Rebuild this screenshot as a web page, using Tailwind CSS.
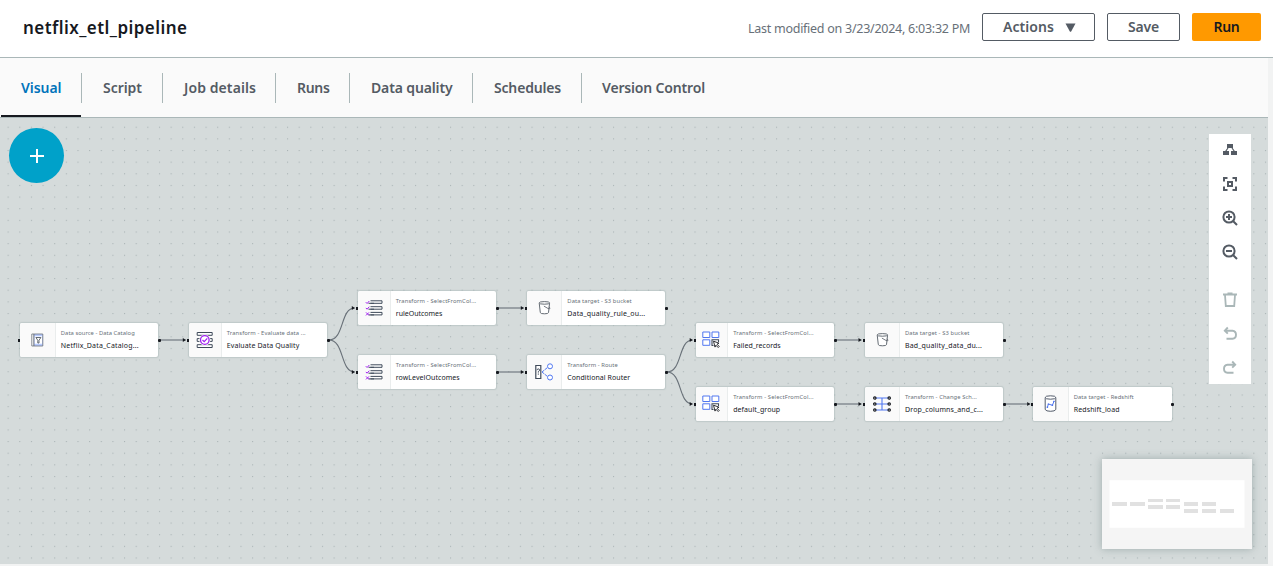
<!DOCTYPE html>
<html lang="en">
<head>
<meta charset="utf-8">
<title>netflix_etl_pipeline</title>
<script src="https://cdn.jsdelivr.net/npm/@tailwindcss/browser@4"></script>
</head>
<body class="w-[1273px] h-[566px] overflow-hidden bg-[#f2f3f3] font-['Noto_Sans','Open_Sans',sans-serif] flex flex-col text-[#545b64]">

<header class="h-[58px] shrink-0 bg-white border-b border-[#aab7b8] flex items-start justify-between pl-[23px] pr-3">
  <h1 class="pt-[15px] text-[17px] leading-[26px] font-semibold text-[#16191f] whitespace-nowrap"><span data-f="600 17px" data-w="164.5">netflix_etl_pipeline</span></h1>
  <div class="flex items-start pt-[13px]">
    <p class="w-[222px] mr-3 pt-1.5 text-[12.5px] leading-5 text-[#687078] whitespace-nowrap"><span data-f="400 12.5px" data-w="222">Last modified on 3/23/2024, 6:03:32 PM</span></p>
    <button class="w-[113px] h-7 mr-3 border border-[#545b64] rounded-[2px] flex items-center pl-5 text-[14px] leading-5 font-semibold whitespace-nowrap"><span data-f="600 14px" data-w="51">Actions</span><svg class="ml-[11px]" width="11" height="9" viewBox="0 0 11 9"><path d="M.5.5h10L6.3 8.2q-.8 1-1.6 0z" fill="#545b64"/></svg></button>
    <button class="w-[73px] h-7 mr-3 border border-[#545b64] rounded-[2px] text-[14px] leading-5 font-semibold whitespace-nowrap"><span data-f="600 14px" data-w="31">Save</span></button>
    <button class="w-[69px] h-7 rounded-[2px] bg-[#ff9900] text-[#16191f] text-[14px] leading-5 font-semibold whitespace-nowrap"><span data-f="600 14px" data-w="26">Run</span></button>
  </div>
</header>

<nav class="w-[1268px] h-[60px] shrink-0 bg-[#fafafa] border-b border-[#aab7b8] flex text-[14px] leading-5 font-semibold whitespace-nowrap">
  <div class="w-[81px] ml-px h-[59px] pt-[15px] text-[#0073bb] flex flex-col justify-between"><div class="h-[30px] pt-[5px] pl-5 border-r border-[#aab7b8]"><span data-f="600 14px" data-w="40.5">Visual</span></div><div class="w-20 h-0.5 bg-[#16191f]"></div></div>
  <div class="w-[81px] mt-[15px] h-[30px] pt-[5px] pl-[21px] border-r border-[#aab7b8]"><span data-f="600 14px" data-w="39">Script</span></div>
  <div class="w-[113px] mt-[15px] h-[30px] pt-[5px] pl-[21px] border-r border-[#aab7b8]"><span data-f="600 14px" data-w="72">Job details</span></div>
  <div class="w-[74px] mt-[15px] h-[30px] pt-[5px] pl-[21px] border-r border-[#aab7b8]"><span data-f="600 14px" data-w="32.5">Runs</span></div>
  <div class="w-[123px] mt-[15px] h-[30px] pt-[5px] pl-[21px] border-r border-[#aab7b8]"><span data-f="600 14px" data-w="81.5">Data quality</span></div>
  <div class="w-[109px] mt-[15px] h-[30px] pt-[5px] pl-[21px] border-r border-[#aab7b8]"><span data-f="600 14px" data-w="67">Schedules</span></div>
  <div class="mt-[15px] h-[30px] pt-[5px] pl-5"><span data-f="600 14px" data-w="103">Version Control</span></div>
</nav>

<main class="relative w-[1268px] h-[446px] shrink-0 overflow-hidden bg-[#d5dbdb]">
  <svg class="absolute inset-0" width="1268" height="446">
    <defs>
      <pattern id="dots" x="7.6" y="8.7" width="11.642" height="11.642" patternUnits="userSpaceOnUse"><rect width="1.1" height="1.1" fill="#aab4b5"/></pattern>
    </defs>
    <rect width="1268" height="446" fill="url(#dots)"/>
    <g id="edges" transform="translate(0 -118)" fill="none" stroke="#687078" stroke-width="1.1"></g>
  </svg>
  <div id="nodes"></div>

  <button class="absolute left-[9px] top-[10px] size-[55px] rounded-full bg-[#00a1c9] flex items-center justify-center">
    <svg class="ml-px mt-px" width="14" height="14" viewBox="0 0 14 14"><path d="M7 0v14M0 7h14" stroke="#fff" stroke-width="2"/></svg>
  </button>

  <div class="absolute left-[1209px] top-4 w-[42px] h-[250px] bg-white flex flex-col items-center pt-2">
    <svg class="size-4 mb-[18px]" viewBox="0 0 16 16"><path d="M5 2h6v4H5zM1 9h6v4H1zM9 9h6v4H9z" fill="#545b64"/><path d="M6 6 3.5 9.5M10 6l2.500 3.500" stroke="#545b64" stroke-width="1.200"/></svg>
    <svg class="size-4 mb-[18px]" viewBox="0 0 16 16" fill="none" stroke="#545b64" stroke-width="2"><path d="M2 5.500V2h3.500M10.500 2H14v3.500M14 10.500V14h-3.500M5.500 14H2v-3.500M6 6h4v4H6z"/></svg>
    <svg class="size-4 mb-[18px] -ml-px" viewBox="0 0 16 16" fill="none" stroke="#545b64" stroke-width="2"><circle cx="7" cy="7" r="5.600"/><path d="m11 11 4 4M4 7h6M7 4v6"/></svg>
    <svg class="size-4 mb-8 -ml-px" viewBox="0 0 16 16" fill="none" stroke="#545b64" stroke-width="2"><circle cx="7" cy="7" r="5.600"/><path d="m11 11 4 4M4 7h6"/></svg>
    <svg class="size-4 mb-[18px]" viewBox="0 0 16 16" fill="none" stroke="#aab7b8" stroke-width="1.800"><path d="M1 2.500h14M5.500 1.400h5M3 3l.8 11h8.400L13 3"/></svg>
    <svg class="size-4 mb-[18px]" viewBox="0 0 16 16" fill="none" stroke="#aab7b8" stroke-width="1.900"><path d="M3 4.700h7.500q3.500.3 3.500 4t-3.500 4H4.500M5.800 1.500 2.800 4.700l3 3"/></svg>
    <svg class="size-4" viewBox="0 0 16 16" fill="none" stroke="#aab7b8" stroke-width="1.900"><path d="M13 4.700H5.500Q2 5 2 8.700t3.500 4h6M10.200 1.500l3 3.200-3 3"/></svg>
  </div>

  <div class="absolute left-[1102px] top-[341px] w-[150px] h-[90px] bg-[#f5f5f5] shadow-[0_0_8px_rgba(90,115,115,0.45)]">
    <svg width="150" height="90" fill="#e1e1e1"><path fill="#fff" d="M7.500 21.300h135v47.500h-135z"/><path d="M10 43h15v4H10zM28 43h15v4H28zM46 40h15v3H46zM64 40h14v3H64zM46 46h15v4H46zM64 46h14v4H64zM82 43h14v4H82zM100 43h14v4h-14zM82 50h14v4H82zM100 50h14v4h-14zM118 50h14v4h-14z"/></svg>
  </div>
</main>

<script>
const icons = {
  catalog: '<g transform="translate(.3 0)"><path d="M3.500 3h2.200v12H3.500z" fill="#fff" stroke="#687078" stroke-width=".8"/><path d="M5.700 3h8.800v12H5.700z" fill="#b9ccff" stroke="#687078" stroke-width=".8"/><path d="M6.500 5.200h7.200v7.500H6.500z" fill="#fff"/><path d="M7.600 6.500h5L10.700 9.300V12H9.500V9.300z" fill="none" stroke="#545b64" stroke-width=".9"/></g>',
  quality: '<path d="M1.200 1.500h15v2.800h-15zM1.200 7.600h15v2.800h-15zM1.200 13.700h15v2.800h-15z" fill="#fff" stroke="#3f4a5a" stroke-width="1"/><circle cx="8.800" cy="9" r="5.600" fill="#fafafa"/><circle cx="8.800" cy="9" r="4.300" fill="#fff" stroke="#a020f0" stroke-width="1.300"/><path d="m6.500 9 1.700 1.700 3.100-3.400" fill="none" stroke="#a020f0" stroke-width="1.200"/>',
  list: '<path d="M5.500 1.800H17v2.500H5.500M5.500 7.700H17v2.500H5.500M5.500 13.400H17v2.500H5.500" fill="#fff" stroke="#3f4a5a"/><path d="M3.500 4.300H9M3.500 10.200H9M3.500 15.900H9" stroke="#3f4a5a"/><path d="m.8 3.200 1.300 1.300L4.300 2M.8 8.900l1.300 1.300L4.300 7.700M1 13.400l3 3M4 13.400l-3 3" fill="none" stroke="#a020f0"/>',
  bucket: '<g transform="translate(.4 -.4)"><path d="M3.800 4.300 4.900 14q.2 1.200 4.100 1.200t4.100-1.200l1.100-9.700" fill="#fff" stroke="#545b64" stroke-width=".9"/><ellipse cx="9" cy="4.300" rx="5.200" ry="1.300" fill="#fff" stroke="#545b64" stroke-width=".9"/><path d="m8.500 7.500 4 2.300q2 1 2.100-.2 0-.6-1.200-1.200" fill="none" stroke="#545b64" stroke-width=".8"/></g>',
  router: '<path d="M.8 2.500h5v13h-5z" fill="#fff" stroke="#3f4a5a" stroke-width="1.200"/><path d="M2 7.200q.1-1.300 1.300-1.300t1.300 1.200q0 .8-1.300 1.500v1M3.300 10.500v1.200" fill="none" stroke="#3f4a5a"/><path d="m7 9 5.500-4.500M7 9l5.500 4.500" stroke="#5077f0" stroke-dasharray="3 .7"/><g fill="#fff" stroke="#5077f0"><circle cx="15" cy="3.300" r="2.500"/><circle cx="15" cy="14.500" r="2.500"/></g>',
  select: '<path d="M.8 1h7v5.500h-7zM10 1h6.800v5.500H10zM.8 8.800h7v5.500h-7z" fill="#fff" stroke="#5077f0"/><path d="M16.500 11V8.800h-6.500v5.700h1.500" fill="#fff" stroke="#3f4a5a" stroke-width="1.100"/><path d="m11.500 10.200 5.500 2-2 1 2.200 2.300-1 1-2.300-2.300-.9 1.900z" fill="#fff" stroke="#16191f" stroke-width=".9"/>',
  schema: '<path d="M9 3v12M3 3h12M3 9h12M3 15h12" stroke="#5077f0" stroke-width="1.100"/><g fill="#fff" stroke="#16191f" stroke-width="1.200"><circle cx="1.800" cy="3" r="1.200"/><circle cx="1.800" cy="9" r="1.200"/><circle cx="1.800" cy="15" r="1.200"/><circle cx="16.200" cy="3" r="1.200"/><circle cx="16.200" cy="9" r="1.200"/><circle cx="16.200" cy="15" r="1.200"/></g>',
  redshift: '<g transform="translate(.5 -.5)"><path d="M3.700 3v12q.8 1.800 5.300 1.800t5.300-1.800V3" fill="#fff" stroke="#3f4a5a" stroke-width=".9"/><ellipse cx="9" cy="3" rx="5.300" ry="1.700" fill="#fff" stroke="#3f4a5a" stroke-width=".9"/><path d="m5.900 12.800 1-3.300 4 1.300 1.700-4.300" fill="none" stroke="#5077f0" stroke-width="1"/><path d="M5.200 12h1.400v1.400H5.200zM6.200 8.900h1.400v1.400H6.200zM10.200 10h1.400v1.400h-1.400zM11.700 6.200h1.400v1.400h-1.400z" fill="#5077f0"/></g>'
};
// x, y, icon, icon panel width, type label, its width, node name, its width
const nodes = [
  [19.8, 323, 'catalog', 36, 'Data source - Data Catalog', 74, 'Netflix_Data_Catalog...', 78],
  [188.8, 323, 'quality', 33, 'Transform - Evaluate data ...', 79, 'Evaluate Data Quality', 72.5],
  [357.8, 291, 'list', 33, 'Transform - SelectFromCol...', 80.5, 'ruleOutcomes', 46.5],
  [357.8, 355, 'list', 33, 'Transform - SelectFromCol...', 80.5, 'rowLevelOutcomes', 64],
  [526.8, 291, 'bucket', 35.5, 'Data target - S3 bucket', 64.5, 'Data_quality_rule_ou...', 78],
  [526.8, 355, 'router', 35.5, 'Transform - Route', 50.5, 'Conditional Router', 63],
  [695.7, 323, 'select', 32.5, 'Transform - SelectFromCol...', 80.5, 'Failed_records', 47.5],
  [695.7, 387, 'select', 32.5, 'Transform - SelectFromCol...', 80.5, 'default_group', 47],
  [864.5, 323, 'bucket', 35.5, 'Data target - S3 bucket', 64.5, 'Bad_quality_data_du...', 77],
  [864.5, 387, 'schema', 35.5, 'Transform - Change Sch...', 72, 'Drop_columns_and_c...', 78],
  [1033.2, 387, 'redshift', 35.5, 'Data target - Redshift', 60, 'Redshift_load', 46]
];
document.getElementById('nodes').innerHTML = nodes.map(([x, y, icon, pw, label, lw, name, nw]) => `
  <div class="absolute w-[138.500px] h-[34px] flex bg-white rounded-[2px] overflow-hidden whitespace-nowrap shadow-[0_0_1px_1px_rgba(170,183,184,0.500)]" style="left:${x}px;top:${y - 118}px">
    <div class="h-full shrink-0 bg-[#fafafa] border-r border-[#eaeded] flex items-center justify-center" style="width:${pw}px"><svg width="18" height="18" viewBox="0 0 18 18">${icons[icon]}</svg></div>
    <div class="pl-[5px] pt-[6px]">
      <div class="text-[5.8px] leading-[8px] text-[#687078]"><span data-f="400 5.8px" data-w="${lw}">${label}</span></div>
      <div class="mt-[4px] text-[7px] leading-[9px] text-[#16191f]"><span data-f="400 7px" data-w="${nw}">${name}</span></div>
    </div>
  </div>`).join('') + nodes.map(([x, y]) => `
  <i class="absolute w-[2px] h-[3px] bg-[#16191f]" style="left:${Math.round(x - 2)}px;top:${y - 102.5}px"></i>
  <i class="absolute size-[3px] rounded-[1px] bg-[#16191f]" style="left:${x + 138}px;top:${y - 102.5}px"></i>`).join('');

const edges = [[0,1],[1,2],[1,3],[2,4],[3,5],[5,6],[5,7],[6,8],[7,9],[9,10]];
document.getElementById('edges').innerHTML = edges.map(([a, b]) => {
  const x1 = nodes[a][0] + 140, y1 = nodes[a][1] + 17, x2 = nodes[b][0] - 2, y2 = nodes[b][1] + 17;
  return `<path d="M${x1} ${y1}C${x1 + 16} ${y1} ${x2 - 16} ${y2} ${x2 - 1} ${y2}"/><path d="M${x2 - 4} ${y2 - 2}l3 2-3 2z" fill="#16191f" stroke="none"/>`;
}).join('');

// Spread each label's letters over its set width.
const ctx = document.createElement('canvas').getContext('2d');
document.querySelectorAll('[data-w]').forEach(el => {
  const size = parseFloat(el.dataset.f.split(' ')[1]);
  ctx.font = el.dataset.f.split(' ')[0] + ' 100px "Noto Sans"';
  const natural = ctx.measureText(el.textContent).width * size / 100;
  el.style.letterSpacing = (el.dataset.w - natural) / el.textContent.length + 'px';
});
</script>
</body>
</html>
